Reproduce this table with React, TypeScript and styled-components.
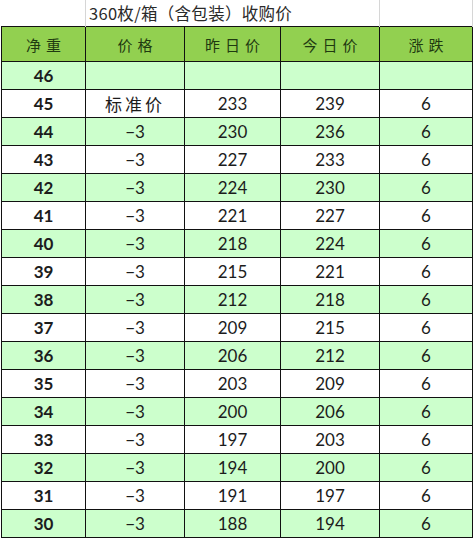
import styled, { createGlobalStyle } from "styled-components";

const GlobalStyle = createGlobalStyle`
  html, body {
    margin: 0;
    padding: 0;
    background: #ffffff;
  }
`;

const rows = [
  { w: 46, p: "", y: "", t: "", d: "" },
  { w: 45, p: "标准价", y: "233", t: "239", d: "6" },
  { w: 44, p: "−3", y: "230", t: "236", d: "6" },
  { w: 43, p: "−3", y: "227", t: "233", d: "6" },
  { w: 42, p: "−3", y: "224", t: "230", d: "6" },
  { w: 41, p: "−3", y: "221", t: "227", d: "6" },
  { w: 40, p: "−3", y: "218", t: "224", d: "6" },
  { w: 39, p: "−3", y: "215", t: "221", d: "6" },
  { w: 38, p: "−3", y: "212", t: "218", d: "6" },
  { w: 37, p: "−3", y: "209", t: "215", d: "6" },
  { w: 36, p: "−3", y: "206", t: "212", d: "6" },
  { w: 35, p: "−3", y: "203", t: "209", d: "6" },
  { w: 34, p: "−3", y: "200", t: "206", d: "6" },
  { w: 33, p: "−3", y: "197", t: "203", d: "6" },
  { w: 32, p: "−3", y: "194", t: "200", d: "6" },
  { w: 31, p: "−3", y: "191", t: "197", d: "6" },
  { w: 30, p: "−3", y: "188", t: "194", d: "6" },
];

const Page = styled.div`
  padding-left: 1px;
`;

const Sheet = styled.table`
  width: 471px;
  border-collapse: collapse;
  table-layout: fixed;
  font-family: "Lato", "Noto Sans CJK SC", sans-serif;
`;

const TitleCell = styled.td`
  height: 26px;
  padding: 0 0 0 3px;
  border-left: 1px solid #d6d6d6;
  border-right: 1px solid #d6d6d6;
  font-family: "Noto Sans CJK SC", sans-serif;
  font-size: 16.5px;
  letter-spacing: 0.3px;
  color: #2a2a2a;
  text-align: left;
  vertical-align: middle;
  white-space: nowrap;
  &:first-child {
    border-left: none;
  }
`;

const HeadCell = styled.th`
  height: 34px;
  padding: 0;
  border: 1px solid #111;
  background: #92d050;
  color: #1f3a10;
  font-family: "Noto Sans CJK SC", sans-serif;
  font-weight: 400;
  font-size: 15px;
  letter-spacing: 5px;
  text-indent: 5px;
  text-align: center;
  vertical-align: middle;
`;

const Row = styled.tr<{ $green: boolean }>`
  background: ${(p) => (p.$green ? "#ccffcc" : "#ffffff")};
`;

const Cell = styled.td<{ $bold?: boolean; $cjk?: boolean }>`
  height: 27px;
  padding: 0;
  border: 1px solid #111;
  color: #1c1c1c;
  font-size: 17px;
  font-weight: ${(p) => (p.$bold ? 700 : 400)};
  font-family: ${(p) =>
    p.$cjk ? `"Noto Sans CJK SC", sans-serif` : `"Lato", "Noto Sans CJK SC", sans-serif`};
  letter-spacing: ${(p) => (p.$cjk ? "3px" : "0")};
  text-align: center;
  vertical-align: middle;
`;

export default function App() {
  return (
    <Page>
      <GlobalStyle />
      <Sheet>
        <colgroup>
          <col style={{ width: 84 }} />
          <col style={{ width: 99 }} />
          <col style={{ width: 96 }} />
          <col style={{ width: 99 }} />
          <col style={{ width: 93 }} />
        </colgroup>
        <tbody>
          <tr>
            <TitleCell />
            <TitleCell colSpan={3}>360枚/箱（含包装）收购价</TitleCell>
            <TitleCell />
          </tr>
          <tr>
            <HeadCell>净重</HeadCell>
            <HeadCell>价格</HeadCell>
            <HeadCell>昨日价</HeadCell>
            <HeadCell>今日价</HeadCell>
            <HeadCell>涨跌</HeadCell>
          </tr>
          {rows.map((r, i) => (
            <Row key={r.w} $green={i % 2 === 0}>
              <Cell $bold>{r.w}</Cell>
              <Cell $cjk={r.p === "标准价"}>{r.p}</Cell>
              <Cell>{r.y}</Cell>
              <Cell>{r.t}</Cell>
              <Cell>{r.d}</Cell>
            </Row>
          ))}
        </tbody>
      </Sheet>
    </Page>
  );
}
